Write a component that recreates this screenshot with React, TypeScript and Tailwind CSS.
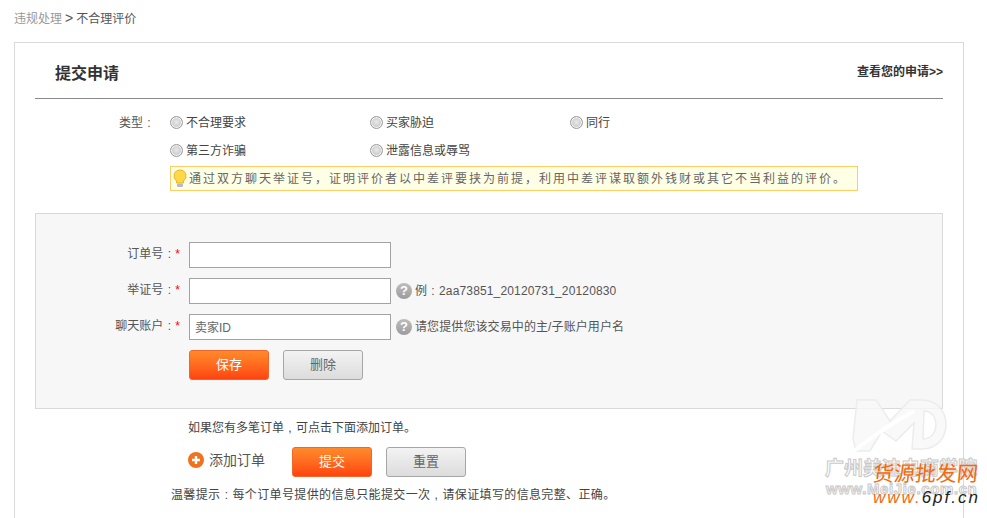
import React from 'react';

// 居中的标点，和参考图的字体一致
const Punct: React.FC<{ c: string }> = ({ c }) => <span className="inline-block w-3 text-center">{c}</span>;

const Radio: React.FC<{ label: string; w?: string }> = ({ label, w = 'w-[200px]' }) => (
  <label className={`flex items-center ${w}`}>
    <span className="w-[13px] h-[13px] -mt-[2px] rounded-full border border-[#9a9a9a] bg-[radial-gradient(circle_at_50%_45%,#e9e9e9_0%,#cfcfcf_55%,#b5b5b5_100%)] shadow-[inset_0_0_0_1px_#f5f5f5]" />
    <span className="ml-[3px] text-[12px] leading-[14px] text-[#444]">{label}</span>
  </label>
);

const Help: React.FC = () => (
  <span className="w-4 h-4 rounded-full bg-linear-to-b from-[#bdbdbd] to-[#9c9c9c] text-white text-[13px] leading-4 font-bold text-center shrink-0">?</span>
);

const Field: React.FC<{ label: string; value?: string; children?: React.ReactNode }> = ({ label, value, children }) => (
  <div className="flex items-center h-[26px] mb-[10px]">
    <div className="w-[153px] text-right text-[12px] text-[#555] pr-[9px] -mt-[2px]">
      {label}<Punct c=":" /><span className="text-[#f00]">*</span>
    </div>
    <div className="w-[202px] h-[26px] border border-[#a3a3a3] bg-white text-[12px] leading-[26px] pl-[5px] text-[#666]">{value}</div>
    {children && <div className="flex items-center ml-[5px] gap-[3px] text-[12px] text-[#555]">{children}</div>}
  </div>
);

const OrangeButton: React.FC<{ label: string }> = ({ label }) => (
  <button className="w-[80px] h-[30px] rounded-[3px] border border-[#f2662a] bg-linear-to-b from-[#ff8a2b] to-[#ff4210] text-white text-[13px]">{label}</button>
);

const GrayButton: React.FC<{ label: string }> = ({ label }) => (
  <button className="w-[80px] h-[30px] rounded-[3px] border border-[#a6a6a6] bg-linear-to-b from-[#f3f3f3] to-[#dcdcdc] text-[#666] text-[13px]">{label}</button>
);

export default function App() {
  return (
    <div className="relative h-[518px] w-[987px] overflow-hidden bg-white pl-[14px] font-['Liberation_Sans','Noto_Sans_CJK_SC',sans-serif]">
      {/* 面包屑 */}
      <div className="h-[42px] pt-[10px] text-[12px] leading-4">
        <span className="text-[#999]">违规处理</span>
        <span className="text-[#555] text-[14px] mx-[3px]">&gt;</span>
        <span className="text-[#555]">不合理评价</span>
      </div>

      <div className="w-[950px] h-[500px] border border-[#d9d9d9] px-[20px]">
        {/* 标题 */}
        <div className="flex items-center justify-between h-[56px] border-b border-[#8a8a8a] pl-[20px]">
          <h1 className="text-[16px] font-bold text-[#333] mt-[6px]">提交申请</h1>
          <a className="text-[12px] font-bold text-[#333] mt-[2px]">查看您的申请&gt;&gt;</a>
        </div>

        {/* 类型 */}
        <div className="flex pt-[17px]">
          <div className="w-[120px] text-right text-[12px] leading-[14px] text-[#555]">类型<Punct c=":" /></div>
          <div className="ml-[15px] w-[690px] -mr-[100px]">
            <div className="flex h-[14px]">
              <Radio label="不合理要求" />
              <Radio label="买家胁迫" />
              <Radio label="同行" />
            </div>
            <div className="flex h-[14px] mt-[14px]">
              <Radio label="第三方诈骗" />
              <Radio label="泄露信息或辱骂" />
            </div>
            <div className="flex items-center h-[25px] mt-[8px] w-[688px] border border-[#ffcc66] bg-[#ffffe5] pl-[1px]">
              <svg width="16" height="19" viewBox="0 0 16 19" className="shrink-0">
                <path d="M8 1a6 6 0 0 0-3.5 10.9V14h7v-2.1A6 6 0 0 0 8 1z" fill="#ffd84a" stroke="#f0b429" />
                <rect x="5" y="14.5" width="6" height="3.5" rx="1" fill="#b9b9c9" />
              </svg>
              <span className="ml-[1px] text-[12px] tracking-[2px] text-[#666] whitespace-nowrap">通过双方聊天举证号，证明评价者以中差评要挟为前提，利用中差评谋取额外钱财或其它不当利益的评价。</span>
            </div>
          </div>
        </div>

        {/* 表单 */}
        <div className="mt-[22px] h-[196px] border border-[#d9d9d9] bg-[#f7f7f7] pt-[28px]">
          <Field label="订单号" />
          <Field label="举证号">
            <Help />
            <span>例<Punct c=":" /><span className="tracking-[0.15px]">2aa73851_20120731_20120830</span></span>
          </Field>
          <Field label="聊天账户" value="卖家ID">
            <Help />
            <span className="tracking-[0.1px]">请您提供您该交易中的主/子账户用户名</span>
          </Field>
          <div className="flex gap-[14px] pl-[153px]">
            <OrangeButton label="保存" />
            <GrayButton label="删除" />
          </div>
        </div>

        {/* 底部 */}
        <div className="pl-[153px] pt-[11px] text-[12px] leading-4 text-[#444]">如果您有多笔订单<Punct c="," />可点击下面添加订单。</div>
        <div className="flex items-center h-[30px] mt-[11px] pl-[153px]">
          <svg width="16" height="16" viewBox="0 0 16 16" className="shrink-0 -mt-[4px]">
            <circle cx="8" cy="8" r="8" fill="#f0711e" />
            <path d="M8 4v8M4 8h8" stroke="#fff" strokeWidth="2.4" />
          </svg>
          <span className="ml-[5px] w-[83px] text-[14px] text-[#555] -mt-[4px]">添加订单</span>
          <div className="flex gap-[14px]">
            <OrangeButton label="提交" />
            <GrayButton label="重置" />
          </div>
        </div>
        <div className="pl-[136px] pt-[10px] text-[12px] leading-4 tracking-[0.37px] text-[#444]">温馨提示<Punct c=":" />每个订单号提供的信息只能提交一次<Punct c="," />请保证填写的信息完整、正确。</div>
      </div>

      {/* 水印 */}
      <svg width="96" height="54" viewBox="0 0 96 54" className="absolute left-[852px] top-[399px]">
        <path fillRule="evenodd" d="M1 40 L5 1 H24 L38 22 L58 1 H70 C102 1 102 50 70 50 H60 L62 24 L44 42 L30 32 L18 52 H4 Z M72 12 L71 40 C88 40 88 12 72 12 Z" fill="#f8f8f8" fillOpacity="0.8" stroke="#ececec" strokeWidth="1.5" />
        <path d="M2 52 C20 38 40 24 62 12" fill="none" stroke="#ffffff" strokeWidth="4" />
      </svg>
      <div className="absolute left-[825px] top-[459px] text-[19px] leading-5 font-bold text-white [-webkit-text-stroke:1px_#c9c9c9] whitespace-nowrap">广州美迪电商学院</div>
      <div className="absolute left-[826px] top-[481px] text-[15px] leading-4 tracking-[0.6px] font-bold text-white [-webkit-text-stroke:1px_#c9c9c9] whitespace-nowrap">www.MeiJie.com.cn</div>
      <div className="absolute left-[873px] top-[462px] text-[21px] leading-6 text-[#f4690c] whitespace-nowrap -skew-x-6">货源批发网</div>
      <div className="absolute left-[873px] top-[488px] text-[17px] leading-5 tracking-[2px] italic whitespace-nowrap">
        <span className="text-[#f4690c]">www.</span>
        <span className="text-[#222]">6pf.cn</span>
      </div>
    </div>
  );
}
